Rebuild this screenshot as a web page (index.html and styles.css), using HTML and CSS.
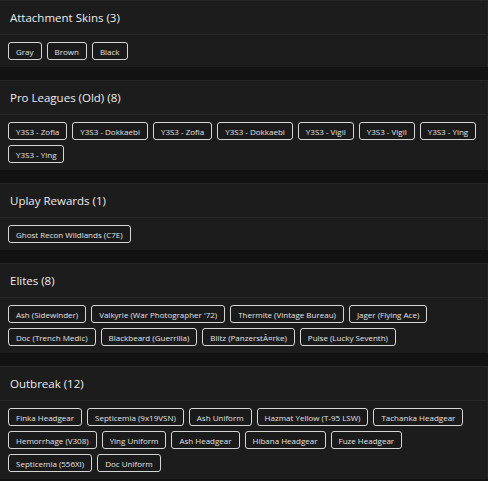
FILE: index.html
```html
<!DOCTYPE html>
<html lang="en">
<head>
  <meta charset="UTF-8">
  <meta name="viewport" content="width=device-width, initial-scale=1.0">
  <title>Cosmetics</title>
  <link rel="stylesheet" href="styles.css">
</head>
<body>
  <div class="panel">
    <div class="panel-head">Attachment Skins (3)</div>
    <div class="panel-body">
      <span class="chip">Gray</span>
      <span class="chip">Brown</span>
      <span class="chip">Black</span>
    </div>
  </div>

  <div class="panel">
    <div class="panel-head">Pro Leagues (Old) (8)</div>
    <div class="panel-body">
      <span class="chip">Y3S3 - Zofia</span>
      <span class="chip">Y3S3 - Dokkaebi</span>
      <span class="chip">Y3S3 - Zofia</span>
      <span class="chip">Y3S3 - Dokkaebi</span>
      <span class="chip">Y3S3 - Vigil</span>
      <span class="chip">Y3S3 - Vigil</span>
      <span class="chip">Y3S3 - Ying</span>
      <span class="chip">Y3S3 - Ying</span>
    </div>
  </div>

  <div class="panel">
    <div class="panel-head">Uplay Rewards (1)</div>
    <div class="panel-body">
      <span class="chip">Ghost Recon Wildlands (C7E)</span>
    </div>
  </div>

  <div class="panel">
    <div class="panel-head">Elites (8)</div>
    <div class="panel-body">
      <span class="chip">Ash (Sidewinder)</span>
      <span class="chip">Valkyrie (War Photographer '72)</span>
      <span class="chip">Thermite (Vintage Bureau)</span>
      <span class="chip">Jager (Flying Ace)</span>
      <span class="chip">Doc (Trench Medic)</span>
      <span class="chip">Blackbeard (Guerrilla)</span>
      <span class="chip">Blitz (PanzerstÃ¤rke)</span>
      <span class="chip">Pulse (Lucky Seventh)</span>
    </div>
  </div>

  <div class="panel">
    <div class="panel-head">Outbreak (12)</div>
    <div class="panel-body">
      <span class="chip">Finka Headgear</span>
      <span class="chip">Septicemia (9x19VSN)</span>
      <span class="chip">Ash Uniform</span>
      <span class="chip">Hazmat Yellow (T-95 LSW)</span>
      <span class="chip">Tachanka Headgear</span>
      <span class="chip">Hemorrhage (V308)</span>
      <span class="chip">Ying Uniform</span>
      <span class="chip">Ash Headgear</span>
      <span class="chip">Hibana Headgear</span>
      <span class="chip">Fuze Headgear</span>
      <span class="chip">Septicemia (556XI)</span>
      <span class="chip">Doc Uniform</span>
    </div>
  </div>
</body>
</html>
```

FILE: styles.css
```css
body {
  margin: 0;
  background-color: #121212;
  font-family: 'Open Sans', sans-serif;
  color: #ececec;
}
.panel {
  background: #1c1c1c;
  border-top: 1px solid #262626;
  border-right: 1px solid #232323;
  margin-bottom: 13px;
}
.panel-head {
  height: 33px;
  line-height: 33px;
  padding: 0 10px;
  font-size: 11.5px;
  font-weight: 500;
  border-bottom: 1px solid #282828;
}
.panel-body {
  display: flex;
  flex-wrap: wrap;
  gap: 5px;
  padding: 7px 8px;
}
.chip {
  display: inline-flex;
  align-items: center;
  height: 18px;
  box-sizing: border-box;
  padding: 0 7px;
  background: #1a1a1a;
  border: 1.5px solid #d6d6d6;
  border-radius: 3px;
  font-size: 8px;
  font-weight: 500;
  color: #e2e2e2;
  white-space: nowrap;
}
```
